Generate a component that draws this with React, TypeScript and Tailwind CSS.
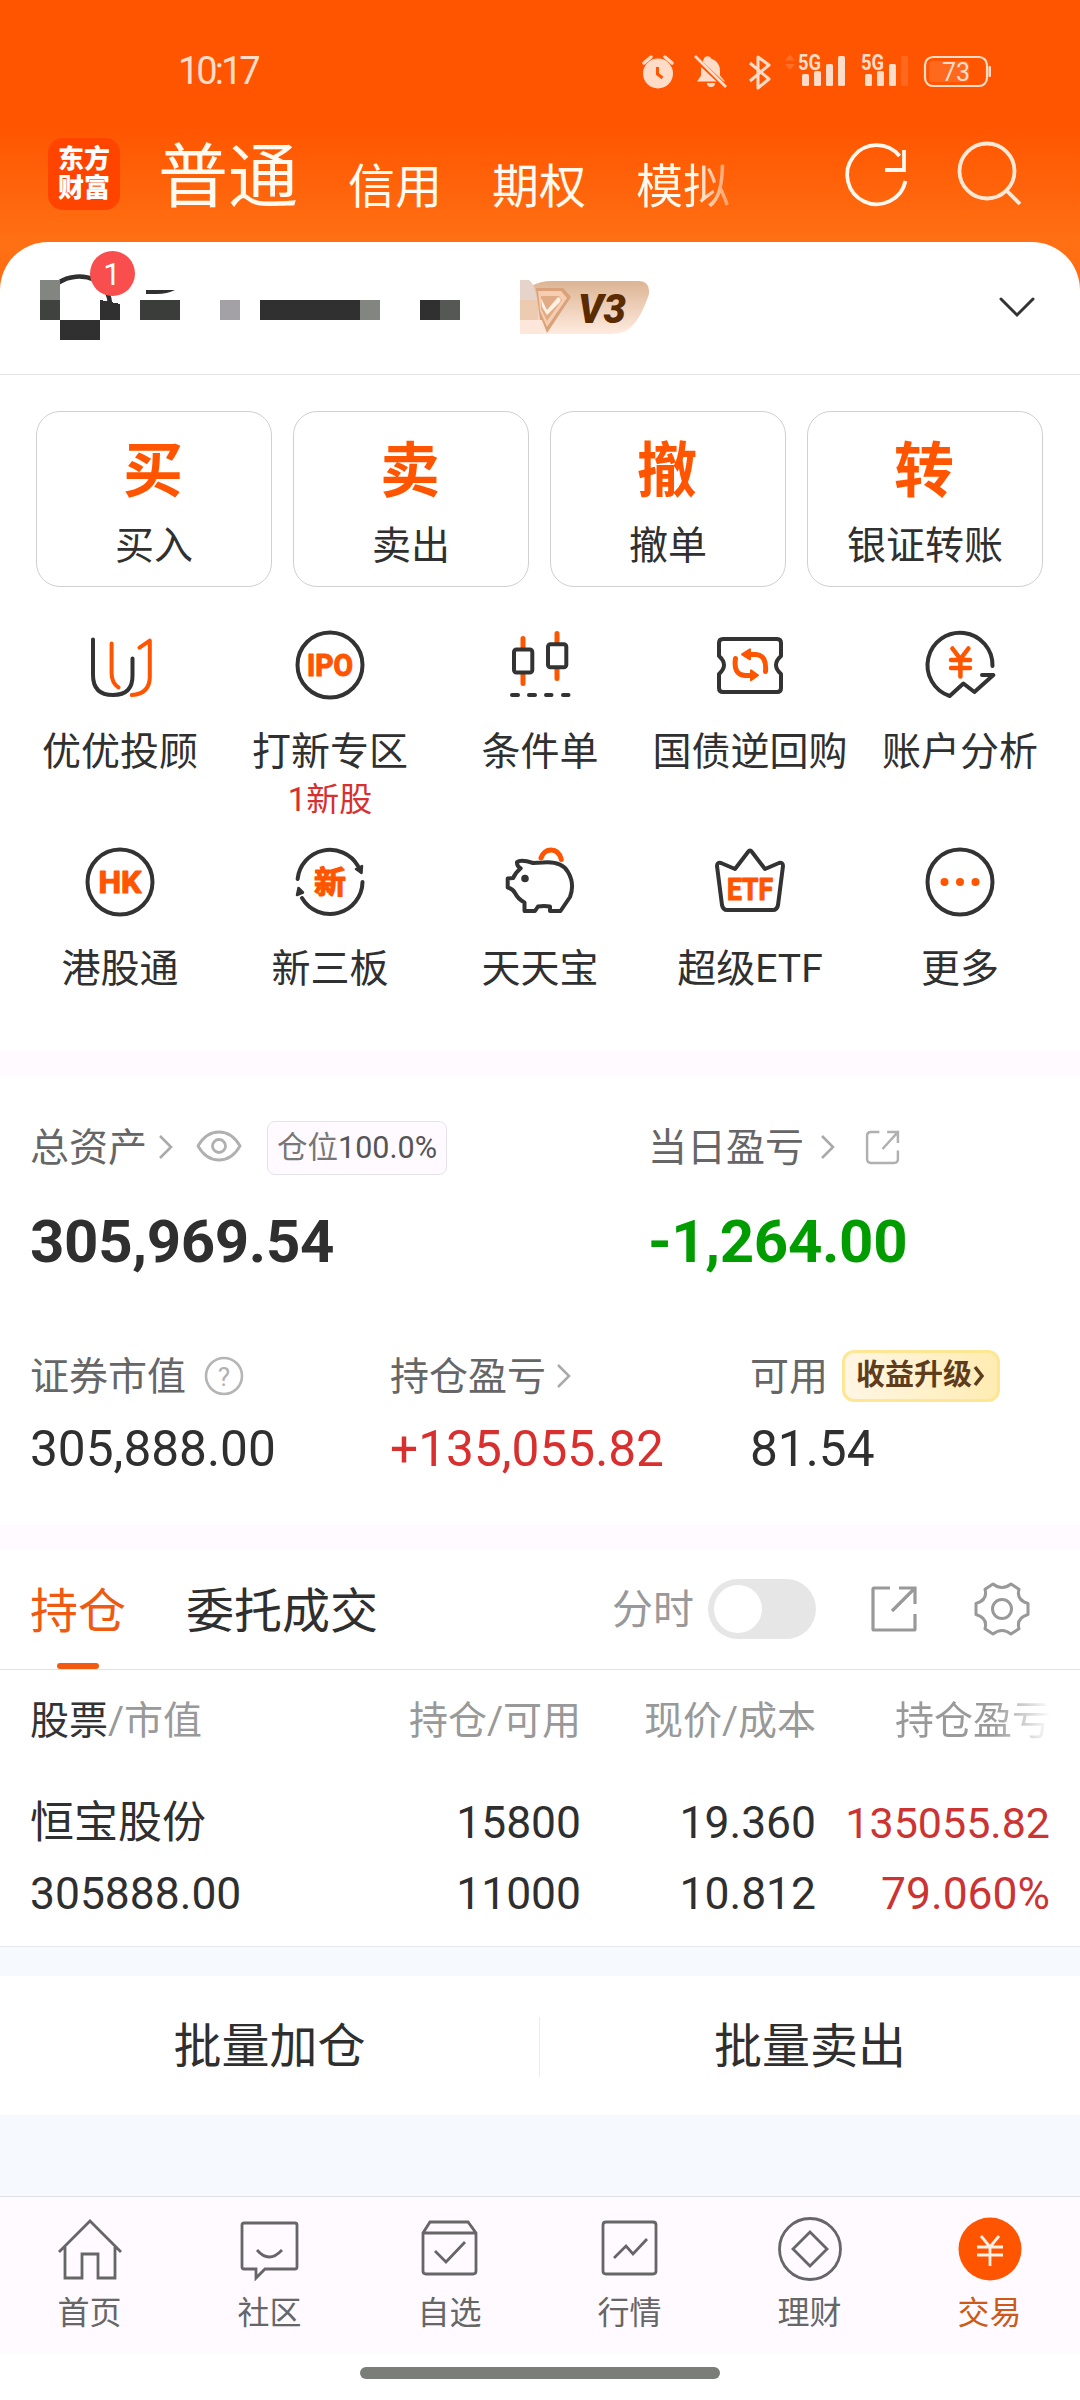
import type { ReactNode } from "react";

const DARK = "#333333";
const ORANGE = "#ff5500";

const Chevron = ({ className = "" }: { className?: string }) => (
  <svg className={className} width="16" height="26" viewBox="0 0 16 26" fill="none" stroke="#aaaaaa" strokeWidth="2.6">
    <path d="M2 2l11 11L2 24" />
  </svg>
);

const StatusBar = () => (
  <div className="flex h-[128px] items-start pt-[44px] text-[#ffdcc8]">
    <span className="ml-[178px] w-[100px] text-[38px] leading-[54px] tracking-[-3px]">10:17</span>
    <svg className="ml-[362px]" width="360" height="54" viewBox="640 44 360 54" fill="currentColor">
      {/* alarm */}
      <circle cx="658" cy="73.500" r="15" />
      <path d="M644 63l7-6M672 63l-7-6" stroke="currentColor" strokeWidth="3.500" strokeLinecap="round" />
      <path d="M657.500 67v7l5 4" stroke="#ff5500" strokeWidth="3" fill="none" />
      {/* muted bell */}
      <path d="M703 58.500c1-3 6-3 7 0 6 2 9 7 9 12v5l5 6h-28l4-6v-5c0-5 2-10 3-12z" transform="translate(1 0)" />
      <path d="M707 83h8a4 4 0 0 1-8 0z" />
      <path d="M693 56l34 32" stroke="#ff5500" strokeWidth="5" />
      <path d="M695 56l31 31" stroke="currentColor" strokeWidth="2.600" />
      {/* bluetooth */}
      <path d="M750 63l19 16-11 9V57l11 8-19 16" fill="none" stroke="currentColor" strokeWidth="3" strokeLinejoin="round" />
      {/* signal */}
      <path d="M785 60.500l5-6 5 6zM785 64l5 6 5-6z" opacity="0.2" />
      <text x="798" y="70" fontSize="22" fontWeight="700" textLength="23" lengthAdjust="spacingAndGlyphs">5G</text>
      <rect x="802" y="74" width="7" height="12" rx="1.500" />
      <rect x="814" y="71" width="7" height="15" rx="1.500" />
      <rect x="826" y="64" width="7" height="22" rx="1.500" />
      <rect x="838" y="56" width="7" height="30" rx="1.500" />
      <text x="861" y="70" fontSize="22" fontWeight="700" textLength="23" lengthAdjust="spacingAndGlyphs">5G</text>
      <rect x="865" y="74" width="7" height="12" rx="1.500" />
      <rect x="877" y="71" width="7" height="15" rx="1.500" />
      <rect x="889" y="64" width="7" height="22" rx="1.500" />
      <rect x="901" y="56" width="7" height="30" rx="1.500" opacity="0.15" />
      {/* battery */}
      <rect x="925" y="57" width="62" height="29" rx="8" fill="none" stroke="currentColor" strokeWidth="2.200" />
      <rect x="929" y="61" width="40" height="21" rx="4" opacity="0.15" />
      <rect x="988.500" y="66" width="2.500" height="11" rx="1" />
      <text x="942" y="80.500" fontSize="25" textLength="28" lengthAdjust="spacingAndGlyphs">73</text>
    </svg>
  </div>
);

const Header = () => (
  <div className="flex h-[114px] items-start">
    <div className="ml-[48px] mt-[10px] flex h-[72px] w-[72px] flex-col items-center justify-center rounded-[15px] bg-[#ff4400] text-[26px] font-black leading-[29px] text-white">
      <span>东方</span>
      <span>财富</span>
    </div>
    <div className="ml-[38px] mt-[4px] flex items-baseline text-[#fffaf0]">
      <span className="text-[70px] leading-[92px]">普通</span>
      <div className="ml-[50px] flex translate-y-[1px] gap-[50px] text-[47px] leading-[60px]">
        <span>信用</span>
        <span>期权</span>
        <span className="bg-gradient-to-r from-[#fffaf0] from-60% to-[#ff9a5c] bg-clip-text text-transparent">模拟</span>
      </div>
    </div>
    <svg className="ml-[112px] mt-[12px]" width="68" height="70" viewBox="842 140 68 70" fill="none" stroke="#fff8ee" strokeWidth="3.800">
      <path d="M905.500 181a29.500 29.500 0 1 1-6-25M904 150v20h-19" />
    </svg>
    <svg className="ml-[46px] mt-[12px]" width="68" height="70" viewBox="956 140 68 70" fill="none" stroke="#ffe9d6" strokeWidth="3.800">
      <circle cx="987" cy="171" r="27.500" />
      <path d="M1006 190l14 14" />
    </svg>
  </div>
);

const AccountRow = () => (
  <div className="flex h-[133px] items-start border-b border-[#e4e4e4]">
    <svg width="520" height="132" viewBox="0 242 520 132">
      <path d="M58 283a34 30 0 0 1 37-3M107 292q3 6 3 14" fill="none" stroke="#303030" strokeWidth="4.500" />
      <path d="M146 290h29q-8 4-18 4h-11z" fill="#303030" />
      <g shapeRendering="crispEdges" fill="#303030">
        <rect x="40" y="280" width="20" height="20" fill="#828580" />
        <rect x="40" y="300" width="20" height="20" fill="#3f423f" />
        <rect x="60" y="320" width="40" height="20" />
        <path d="M100 300l20 4v16h-20z" />
        <rect x="140" y="300" width="40" height="20" fill="#3a3d3a" />
        <rect x="220" y="300" width="20" height="20" fill="#a3a1a6" />
        <rect x="260" y="300" width="100" height="20" />
        <rect x="360" y="300" width="20" height="20" fill="#828580" />
        <rect x="420" y="300" width="20" height="20" />
        <rect x="440" y="300" width="20" height="20" fill="#555855" />
      </g>
      <circle cx="112.500" cy="273.500" r="22.500" fill="#f94e4e" />
      <text x="112" y="285" textAnchor="middle" fontSize="31" fill="#fff">1</text>
    </svg>
    <svg className="mt-[36px]" width="132" height="60" viewBox="520 278 132 60">
      <defs>
        <linearGradient id="tier" x1="0" y1="0" x2="0" y2="1">
          <stop offset="0" stopColor="#dcb493" />
          <stop offset="1" stopColor="#ffebdf" />
        </linearGradient>
      </defs>
      <path d="M552 281h86q12 0 11 13-8 24-18 33-7 7-20 7h-91v-34q8-19 32-19z" fill="url(#tier)" />
      <path d="M520 280h9q6 4 8 20h-17z" fill="#e6d3c9" />
      <path d="M520 300h18v20h-18z" fill="#edcbb0" />
      <path d="M520 320h22v14h-22z" fill="#fde6da" />
      <path d="M536 288h27l8 9-24 36-5-13h-2z" fill="#d9a27a" />
      <path d="M538 291h23l6 7-20 29-7-16z" fill="#f6cdb0" />
      <path d="M541 296h18l3 4-15 21-6-12z" fill="#e0ab85" />
      <path d="M541 298l6 12 11-13q4 1 2 5l-13 13-5-8z" fill="#fff0e2" />
      <text x="578" y="323" fontSize="41" fontWeight="900" fontStyle="italic" fill="#5a2a00" textLength="48" lengthAdjust="spacingAndGlyphs">V3</text>
    </svg>
    <svg className="ml-[345px] mt-[52px]" width="40" height="26" viewBox="0 0 40 26" fill="none" stroke="#333" strokeWidth="3" strokeLinecap="round">
      <path d="M4 5l16 16L36 5" />
    </svg>
  </div>
);

const actions = [
  { mark: "买", label: "买入" },
  { mark: "卖", label: "卖出" },
  { mark: "撤", label: "撤单" },
  { mark: "转", label: "银证转账" },
];

const QuickActions = () => (
  <div className="grid grid-cols-4 gap-[21px] pl-[36px] pr-[37px] pt-[36px]">
    {actions.map((a) => (
      <div key={a.label} className="flex h-[176px] flex-col items-center rounded-[24px] border border-[#d0d0d0] pt-[20px]">
        <span className="mr-[2px] text-[60px] font-bold leading-[80px] text-[#ff5500]">{a.mark}</span>
        <span className="mt-[8px] text-[39px] leading-[52px] text-[#303030]">{a.label}</span>
      </div>
    ))}
  </div>
);

/* each icon is drawn in a 76px box centred on 38,38 */
const Icon = ({ children }: { children: ReactNode }) => (
  <svg width="76" height="76" viewBox="0 0 76 76" fill="none" stroke={DARK} strokeWidth="4" strokeLinecap="round" strokeLinejoin="round">
    {children}
  </svg>
);

const Ring = () => <circle cx="38" cy="38" r="32.500" />;

const IconText = ({ y = 49, size = 31, width, children }: { y?: number; size?: number; width: number; children: string }) => (
  <text x={38 - width / 2} y={y} fontSize={size} fontWeight="700" fill={ORANGE} stroke={ORANGE} strokeWidth="1.2" textLength={width} lengthAdjust="spacingAndGlyphs">
    {children}
  </text>
);

const tools = [
  {
    label: "优优投顾",
    icon: (
      <Icon>
        <path d="M11 12.500V48q0 20 20 20t19.500-20V31.500" />
        <path d="M29.600 16.500V46q0 10 7 14.500M57.500 20.700l10.300-7v36q0 17-18 18.300" stroke={ORANGE} />
      </Icon>
    ),
  },
  {
    label: "打新专区",
    note: "1新股",
    icon: (
      <Icon>
        <Ring />
        <IconText width={46}>IPO</IconText>
      </Icon>
    ),
  },
  {
    label: "条件单",
    icon: (
      <Icon>
        <path d="M21 11.500v10M21 47v9.500M55 6.500v9M55 42v9.500" stroke={ORANGE} strokeWidth="5" />
        <rect x="12" y="22.500" width="18.300" height="23" rx="2.500" />
        <rect x="46" y="17.300" width="18.300" height="23" rx="2.500" />
        <path d="M10 68h6M27 68h6M44 68h5.500M61 68h5.500" />
      </Icon>
    ),
  },
  {
    label: "国债逆回购",
    icon: (
      <Icon>
        <path d="M11 12h54q4 0 4 4v13q-10 9 0 18v14q0 4-4 4H11q-4 0-4-4V47q10-9 0-18V16q0-4 4-4z" />
        <path d="M39 27.500h5q11 1 9.500 17M38 48.500h-5q-12-1-9.500-17" stroke={ORANGE} strokeWidth="5" />
        <path d="M30 27.300l8-5v10zM46 48.300l-7-5v10z" fill={ORANGE} stroke={ORANGE} strokeWidth="2" />
      </Icon>
    ),
  },
  {
    label: "账户分析",
    icon: (
      <Icon>
        <path d="M70.500 39A32.500 32.500 0 1 0 27.700 69l13.700-12.500 11 8.500 19-17H60" />
        <path d="M30.400 21.500l8 10.500 8-10.500M38.400 32v17.500M29 33h19M29 41h19" stroke={ORANGE} strokeWidth="4.500" />
      </Icon>
    ),
  },
  {
    label: "港股通",
    icon: (
      <Icon>
        <Ring />
        <IconText width={43}>HK</IconText>
      </Icon>
    ),
  },
  {
    label: "新三板",
    icon: (
      <Icon>
        <path d="M5.600 35A32.500 32.500 0 0 1 66 22M70.500 38A32.500 32.500 0 0 1 10 54" />
        <path d="M64 25l6-3-.5 7zM6.500 44l-1.500 7 6-2.500z" fill={DARK} strokeWidth="2.500" />
        <IconText width={32} size={31}>新</IconText>
      </Icon>
    ),
  },
  {
    label: "天天宝",
    icon: (
      <Icon>
        <path d="M39 14q3-8 10-8 8 0 10.300 9.500" stroke={ORANGE} strokeWidth="5" />
        <path d="M15 18q4-3 16 1l10-.5Q60 17 66 28q7 12 2 25l-9.500 14H48v-4.500q-6-1-12 0L33 67H22.500v-8.500Q16 55 13 49q-2-4-7.300-5.500V34.500l5.500-.5q2-5 7.500-9.700-4-2-3.700-6.300z" />
        <circle cx="23" cy="34.500" r="1.800" fill={DARK} />
      </Icon>
    ),
  },
  {
    label: "超级ETF",
    icon: (
      <Icon>
        <path d="M5 22q0-4 4-3l14 6L36 8q2-3 4 0l13 17 14-6q4-1 4 3l-5 39q-1 5-5 5H15q-4 0-5-5z" />
        <IconText y={56} width={46}>ETF</IconText>
      </Icon>
    ),
  },
  {
    label: "更多",
    icon: (
      <Icon>
        <Ring />
        <g fill={ORANGE} stroke="none">
          <circle cx="22.500" cy="38" r="4" />
          <circle cx="38" cy="38" r="4" />
          <circle cx="53.500" cy="38" r="4" />
        </g>
      </Icon>
    ),
  },
];

const ToolGrid = () => (
  <div className="mt-[40px] grid h-[424px] auto-rows-[217px] grid-cols-5 px-[15px]">
    {tools.map((t) => (
      <div key={t.label} className="flex flex-col items-center">
        {t.icon}
        <span className="mt-[24px] whitespace-nowrap text-[39px] leading-[50px] text-[#303030]">{t.label}</span>
        {t.note && <span className="mt-[3px] text-[33px] leading-[40px] text-[#d63030]">{t.note}</span>}
      </div>
    ))}
  </div>
);

const ShareIcon = ({ size, color, round = false }: { size: number; color: string; round?: boolean }) => (
  <svg width={size} height={size} viewBox="0 0 48 48" fill="none" stroke={color} strokeWidth="3.2">
    <path d={round ? "M20 4H9q-5 0-5 5v30q0 5 5 5h30q5 0 5-5V28" : "M20 3H4q-1 0-1 1v40q0 1 1 1h40q1 0 1-1V29"} />
    <path d={round ? "M30 4h14v14M43 5L24 26" : "M29 3h16v16M44 4L22 26"} />
  </svg>
);

const Summary = () => (
  <div className="h-[449px] px-[30px] pt-[44px]">
    <div className="flex text-[39px] leading-[56px] text-[#666]">
      <div className="w-[618px]">
        <div className="flex h-[56px] items-center">
          <span>总资产</span>
          <Chevron className="ml-[11px] -translate-y-[1px]" />
          <svg className="ml-[22px] -translate-y-[2px]" width="46" height="34" viewBox="0 0 46 34" fill="none" stroke="#b0b0b0" strokeWidth="2.8">
            <path d="M2 17Q10 3 23 3t21 14Q36 31 23 31T2 17z" />
            <circle cx="23" cy="17" r="6.5" />
          </svg>
          <span className="ml-[25px] flex h-[54px] w-[180px] items-center justify-center rounded-[8px] border border-[#e6e2e9] bg-[#fefaff] text-[30.5px] text-[#777]">
            仓位<span className="text-[#555]">100.0%</span>
          </span>
        </div>
        <div className="mt-[29px] text-[60px] font-bold leading-[74px] tracking-[-0.35px] text-[#2f2f2f]">305,969.54</div>
      </div>
      <div>
        <div className="flex h-[56px] items-center">
          <span>当日盈亏</span>
          <Chevron className="ml-[16px] mr-[28px] -translate-y-[1px]" />
          <span className="-translate-y-[1px]">
            <ShareIcon size={37} color="#b0b0b0" round />
          </span>
        </div>
        <div className="mt-[29px] text-[60px] font-bold leading-[74px] tracking-[-0.35px] text-[#009c00]">-1,264.00</div>
      </div>
    </div>
    <div className="mt-[68px] grid grid-cols-[360px_360px_auto] text-[39px] text-[#666]">
      <div className="flex h-[60px] items-center">
        证券市值
        <svg className="ml-[18px] -translate-y-[1px]" width="40" height="40" viewBox="0 0 40 40">
          <circle cx="20" cy="20" r="18" fill="none" stroke="#b5b5b5" strokeWidth="2.6" />
          <text x="20" y="29.5" textAnchor="middle" fontSize="26" fill="#b0b0b0">?</text>
        </svg>
      </div>
      <div className="flex h-[60px] items-center">
        持仓盈亏
        <Chevron className="ml-[10px] -translate-y-[1px]" />
      </div>
      <div className="flex h-[60px] items-center">
        可用
        <span className="ml-[14px] flex h-[52px] w-[158px] -translate-y-[1px] items-center justify-center rounded-[12px] border-[3px] border-[#fde794] bg-gradient-to-r from-[#fff6e4] to-[#ffecb2] text-[29px] font-bold text-[#5e3c1c]">
          收益升级
          <svg width="14" height="22" viewBox="0 0 14 22" fill="none" stroke="#5e3c1c" strokeWidth="3.500">
            <path d="M3 2l7 9-7 9" />
          </svg>
        </span>
      </div>
    </div>
    <div className="mt-[12px] grid grid-cols-[360px_360px_auto] text-[49.6px] leading-[60px] text-[#2f2f2f]">
      <span>305,888.00</span>
      <span className="text-[#d9302f]">+135,055.82</span>
      <span>81.54</span>
    </div>
  </div>
);

const PositionTabs = () => (
  <div className="flex h-[121px] items-start border-b border-[#e2e2e2] pl-[30px] text-[48px] leading-[60px]">
    <div className="flex h-[120px] flex-col items-center pt-[33px] text-[#ee5a12]">
      持仓
      <span className="mt-[21px] h-[6px] w-[42px] rounded-full bg-[#f25a10]" />
    </div>
    <span className="ml-[60px] mt-[33px] text-[#2f2f2f]">委托成交</span>
    <div className="ml-[234px] mt-[30px] flex h-[60px] items-center">
      <span className="translate-y-[1px] text-[41px] text-[#999]">分时</span>
      <span className="ml-[14px] flex h-[60px] w-[108px] items-center rounded-full bg-[#e6e6e6] pl-[6px]">
        <span className="h-[48px] w-[48px] rounded-full bg-white" />
      </span>
      <span className="ml-[54px]">
        <ShareIcon size={48} color="#999999" />
      </span>
      <svg className="ml-[55px]" width="58" height="58" viewBox="0 0 58 58" fill="none" stroke="#999" strokeWidth="3" strokeLinejoin="round">
        <path d="M20 4Q29 11 38 4L46 9.300Q43 20 55 23.500V34.500Q43 38 46 48.700L38 54Q29 47 20 54L12 48.700Q15 38 3 34.500V23.500Q15 20 12 9.300z" />
        <circle cx="29" cy="29" r="9.500" />
      </svg>
    </div>
  </div>
);

const Holdings = () => (
  <div className="h-[277px] border-b border-[#e6e8ec] pl-[30px] text-[44.4px] leading-[71px] text-[#2f2f2f]">
    <div className="grid h-[102px] grid-cols-[300px_251px_235px_235px] items-center text-right text-[39px] text-[#999]">
      <span className="text-left">
        <span className="text-[#333]">股票</span>/市值
      </span>
      <span>持仓/可用</span>
      <span>现价/成本</span>
      <span className="bg-gradient-to-r from-[#999] from-75% to-white bg-clip-text text-transparent">持仓盈亏</span>
    </div>
    <div className="mt-[16px] grid grid-cols-[300px_251px_235px_234px] text-right">
      <span className="text-left text-[44px]">恒宝股份</span>
      <span>15800</span>
      <span>19.360</span>
      <span className="text-[43px] text-[#cc3333]">135055.82</span>
      <span className="text-left">305888.00</span>
      <span>11000</span>
      <span>10.812</span>
      <span className="text-[#cc3333]">79.060%</span>
    </div>
  </div>
);

const BatchBar = () => (
  <div className="h-[249px] bg-[#f6faff] pt-[29px]">
    <div className="grid h-[139px] grid-cols-2 items-center bg-white pt-[2px] text-center text-[48px] leading-[60px] text-[#2f2f2f]">
      <span className="border-r border-[#ececec]">批量加仓</span>
      <span>批量卖出</span>
    </div>
  </div>
);

const navItems = [
  {
    label: "首页",
    icon: <path d="M4 38L35 7l31 31M10 33v31h17V40h16v24h17V33" />,
  },
  {
    label: "社区",
    icon: <path d="M9 9h51q2 0 2 2v42q0 2-2 2H30l-9 9v-9H9q-2 0-2-2V11q0-2 2-2zM22 36q12 14 25 0" />,
  },
  {
    label: "自选",
    icon: <path d="M15 8h38l8 11v38q0 3-3 3H11q-3 0-3-3V19zM8 19h53M20 37l11 11 19-20" />,
  },
  {
    label: "行情",
    icon: <path d="M11 8h47q3 0 3 3v46q0 3-3 3H11q-3 0-3-3V11q0-3 3-3zM19 44l12-12 7 8 14-15" />,
  },
  {
    label: "理财",
    icon: (
      <>
        <circle cx="35" cy="35" r="30.500" />
        <path d="M35 18l17 17-17 17-17-17z" />
      </>
    ),
  },
  {
    label: "交易",
    active: true,
    icon: (
      <>
        <circle cx="35" cy="35" r="31.500" fill={ORANGE} stroke="none" />
        <path d="M26 22l9 11 9-11M35 33v19M22 33h26M22 41h26" stroke="#fff1e6" />
      </>
    ),
  },
];

const BottomNav = () => (
  <div className="grid h-[157px] grid-cols-6 border-t border-[#e0e0e4] bg-[#fefaff]">
    {navItems.map((n) => (
      <div key={n.label} className="flex flex-col items-center pr-px pt-[17px]">
        <svg width="70" height="70" viewBox="0 0 70 70" fill="none" stroke="#666" strokeWidth="2.8">
          {n.icon}
        </svg>
        <span className={n.active ? "mt-[9px] text-[32px] leading-[40px] text-[#cc5a18]" : "mt-[9px] text-[32px] leading-[40px] text-[#666]"}>
          {n.label}
        </span>
      </div>
    ))}
  </div>
);

export default function App() {
  return (
    <div className="h-[2400px] w-[1080px] overflow-hidden bg-white font-['Roboto','Noto_Sans_CJK_SC',sans-serif]">
      <div className="bg-[linear-gradient(180deg,#ff5500_0px,#ff5500_125px,#ff7014_242px,#ff6a10_290px)]">
        <StatusBar />
        <Header />
        <div className="rounded-t-[48px] bg-white">
          <AccountRow />
          <QuickActions />
          <ToolGrid />
        </div>
      </div>
      <div className="h-[25px] bg-[#fefaff]" />
      <Summary />
      <div className="h-[24px] bg-[#fefaff]" />
      <PositionTabs />
      <Holdings />
      <BatchBar />
      <BottomNav />
      <div className="flex justify-center pt-[14px]">
        <div className="h-[12px] w-[360px] rounded-full bg-[#7b7d79]" />
      </div>
    </div>
  );
}
